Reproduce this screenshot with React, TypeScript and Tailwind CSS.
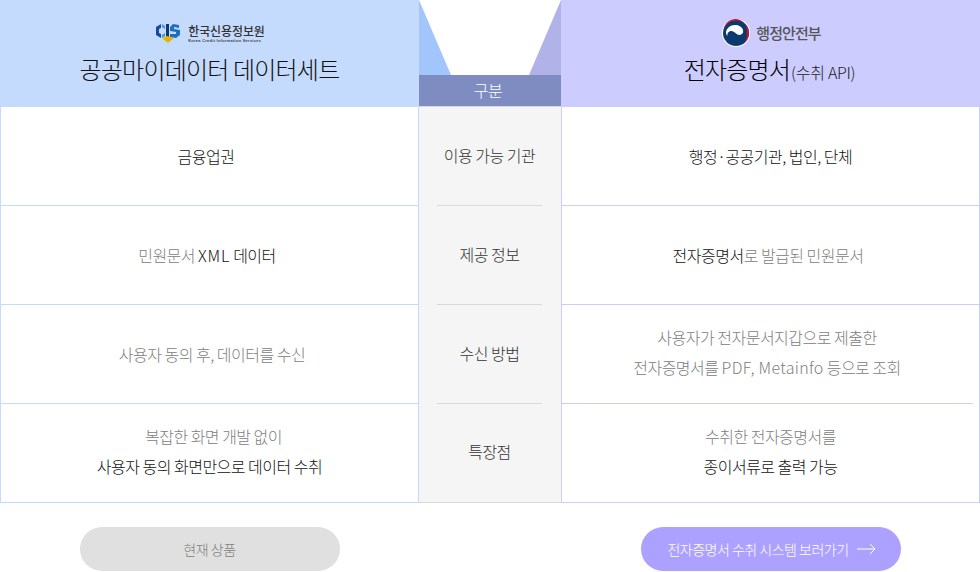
const dark = "text-[#111]";

const rows = [
  {
    label: "이용 가능 기관",
    left: [<div className={`pr-[7px] ${dark}`}>금융업권</div>],
    right: [<div className={dark}>행정·공공기관, 법인, 단체</div>],
  },
  {
    label: "제공 정보",
    left: [<div className="pr-[5px]">민원문서 <span className={dark}><span className="tracking-[0.8px]">XML</span> 데이터</span></div>],
    right: [<div className="pr-[5px]"><span className={dark}>전자증명서</span>로 발급된 민원문서</div>],
  },
  {
    label: "수신 방법",
    left: [<div className="pl-[5px]">사용자 동의 후, 데이터를 수신</div>],
    right: [
      <div className="pr-[7px]">사용자가 전자문서지갑으로 제출한</div>,
      <div className="pr-[7px]">전자증명서를 <span className="tracking-[0.3px]">PDF, Metainfo</span> 등으로 조회</div>,
    ],
  },
  {
    label: "특장점",
    left: [
      <div className="pl-[8px]">복잡한 화면 개발 없이</div>,
      <div className={dark}>사용자 동의 화면만으로 데이터 수취</div>,
    ],
    right: [<div>수취한 전자증명서를</div>, <div className={dark}>종이서류로 출력 가능</div>],
  },
];

function CisLogo() {
  return (
    <svg width="26" height="22" viewBox="0 0 26 22">
      <path d="M6 2 L1 5 V13 L6 16 V12 L4 11 V7 L6 6 Z" fill="#1b4a9c" />
      <path d="M7 2 L10 4 V7 L7 5 Z M7 13 L10 11 V14 L7 16 Z" fill="#2f9fd8" />
      <path d="M11 2 H14 V15 H11 Z" fill="#15356f" />
      <path d="M24 3 L18 2 L15 5 V9 L21 10 V12 L15 12 V15 L21 16 L25 13 V8 L19 7 V5 L24 6 Z" fill="#1f6fc0" />
      <path d="M7 16 L12 14 L19 16 L13 21 Z" fill="#e8b400" />
    </svg>
  );
}

function GovLogo() {
  return (
    <svg width="28" height="28" viewBox="0 0 28 28">
      <circle cx="14" cy="14" r="14" fill="#fff" />
      <circle cx="14" cy="14" r="13" fill="#0b3a6e" />
      <path d="M2.2 9 A13 13 0 0 1 27 14 A13 13 0 0 1 21 25 A12 12 0 0 0 24.5 14 A11 11 0 0 0 2.2 9 Z" fill="#c8102e" />
      <path d="M4 14 C4 9 9 5.5 14 6 C19 6.5 22 10 21 13.5 C20 16.5 16 16.5 14 14.5 C12 12.5 9.5 11.5 7.5 12.5 C5.8 13.3 5 15 5.5 17 C4.5 16 4 15 4 14 Z" fill="#fff" />
    </svg>
  );
}

function Cell({ lines, line, short }: { lines: React.ReactNode[]; line: string; short?: boolean }) {
  return (
    <div className="flex h-[99px] flex-col">
      <div
        className={`flex flex-1 flex-col items-center justify-center leading-[30px] text-[#808080] ${
          lines.length > 1 ? "pb-[4px]" : "pb-[1px]"
        }`}
      >
        {lines}
      </div>
      <div className={`h-px ${line} ${short ? "mr-[6px]" : ""}`} />
    </div>
  );
}

export default function App() {
  return (
    <div
      className="h-[572px] w-[980px] overflow-hidden bg-white text-[16px] font-light tracking-[-0.5px]"
      style={{ fontFamily: '"Noto Sans CJK KR", "Noto Sans", sans-serif' }}
    >
      <div className="flex">
        <div className="w-[419px]">
          <div className="flex h-[107px] flex-col items-center bg-[#c5dbfd] pt-[20px]">
            <div className="flex h-[26px] items-center gap-[7px] pl-[1px]">
              <CisLogo />
              <div className="flex flex-col">
                <span className="text-[12px] leading-[15px] font-medium tracking-[-0.1px] text-[#333]">한국신용정보원</span>
                <span className="text-[4px] leading-[6px] font-bold tracking-[0.25px] text-[#444]" style={{ fontFamily: '"Liberation Sans", sans-serif' }}>Korea Credit Information Services</span>
              </div>
            </div>
            <h2 className="mt-[5px] text-[24px] leading-[36px] font-light tracking-[-0.8px] text-[#111]">공공마이데이터 데이터세트</h2>
          </div>
          <div className="border-x border-[#c5dbfd]">
            {rows.map((r, i) => (
              <Cell key={i} lines={r.left} line="bg-[#c5dbfd]" />
            ))}
          </div>
        </div>

        <div className="w-[142px]">
          <div className="flex h-[75px] justify-between">
            <svg width="32" height="75" viewBox="0 0 32 75">
              <polygon points="0,0 32,75 0,75" fill="#a2c6fb" />
            </svg>
            <svg width="32" height="75" viewBox="0 0 32 75">
              <polygon points="32,0 0,75 32,75" fill="#b1b2e8" />
            </svg>
          </div>
          <div className="flex h-[32px] items-center justify-center border-b border-[#d9d9d9] bg-[#7f8cc2] pr-[4px] pb-[2px] text-white">구분</div>
          <div className="border-b border-[#d9d9d9] bg-[#f5f5f5] px-[18px] pr-[19px] text-[#333]">
            {rows.map((r, i) => (
              <div
                key={i}
                className={`flex items-center justify-center ${i < 3 ? "h-[99px] border-b border-[#d9d9d9] pb-[2px]" : "h-[98px] pb-[4px]"}`}
              >
                {r.label}
              </div>
            ))}
          </div>
        </div>

        <div className="w-[419px]">
          <div className="flex h-[107px] flex-col items-center bg-[#ccccff] pt-[19px]">
            <div className="flex h-[28px] items-center gap-[6px] pl-[2px]">
              <GovLogo />
              <span className="text-[15px] font-medium tracking-[-0.9px] text-[#555]">행정안전부</span>
            </div>
            <h2 className="mt-[4px] pr-[2px] text-[24px] leading-[36px] font-light tracking-[-0.8px] text-black">
              전자증명서<span className="ml-[1px] text-[16px] font-light tracking-[-0.3px] text-[#222]">(수취 API)</span>
            </h2>
          </div>
          <div className="border-x border-[#ccccff]">
            {rows.map((r, i) => (
              <Cell key={i} lines={r.right} line="bg-[#ccccff]" short={i === 2} />
            ))}
          </div>
        </div>
      </div>

      <div className="mt-[24px] flex">
        <div className="flex w-[419px] justify-center">
          <div className="flex h-[44px] w-[260px] items-center justify-center rounded-full bg-[#e0e0e0] text-[14px] tracking-[-0.4px] text-[#808080]">현재 상품</div>
        </div>
        <div className="w-[142px]" />
        <div className="flex w-[419px] justify-center">
          <div className="flex h-[44px] w-[260px] items-center justify-center gap-[8px] rounded-full bg-[#ada1ff] pl-[2px] text-[14px] tracking-[-0.5px] text-white">
            전자증명서 수취 시스템 보러가기
            <svg width="19" height="12" viewBox="0 0 19 12" fill="none" stroke="#fff" strokeWidth="1">
              <path d="M0 6 H18 M13 1 L18 6 L13 11" />
            </svg>
          </div>
        </div>
      </div>
    </div>
  );
}
